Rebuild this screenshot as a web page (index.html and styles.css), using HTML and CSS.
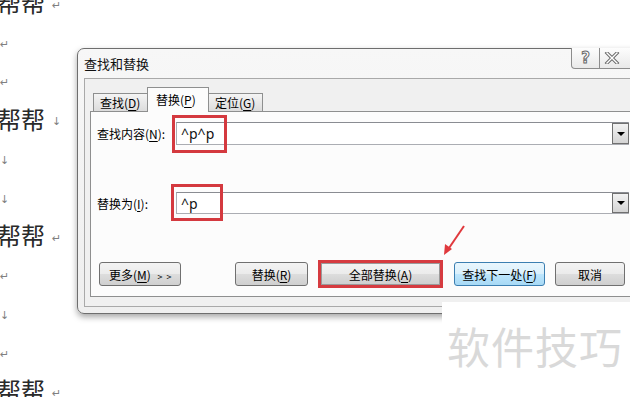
FILE: index.html
```html
<!DOCTYPE html>
<html lang="zh-CN">
<head>
  <meta charset="UTF-8">
  <title>查找和替换</title>
  <link rel="stylesheet" href="styles.css">
</head>
<body>

  <!-- Document behind the dialog -->
  <div class="doc">
    <div class="line"><span class="big">帮帮</span><span class="mark">↵</span></div>
    <div class="line"><span class="mark">↵</span></div>
    <div class="line"><span class="mark">↵</span></div>
    <div class="line"><span class="big">帮帮</span><span class="mark">↓</span></div>
    <div class="line"><span class="mark">↓</span></div>
    <div class="line"><span class="mark">↓</span></div>
    <div class="line"><span class="big">帮帮</span><span class="mark">↵</span></div>
    <div class="line"><span class="mark">↵</span></div>
    <div class="line"><span class="mark">↓</span></div>
    <div class="line"><span class="mark">↵</span></div>
    <div class="line"><span class="big">帮帮</span><span class="mark">↵</span></div>
  </div>

  <!-- Find and replace dialog -->
  <div class="dialog">
    <div class="titlebar">查找和替换</div>
    <div class="caption-btns">
      <div class="cap-btn help">?</div>
      <div class="cap-btn close">
        <svg width="16" height="12" viewBox="0 0 16 12">
          <path d="M3 1 L13 11 M13 1 L3 11" stroke="#6a6a6a" stroke-width="3.4" stroke-linecap="square"/>
          <path d="M3 1 L13 11 M13 1 L3 11" stroke="#fff" stroke-width="1.4" stroke-linecap="square"/>
        </svg>
      </div>
    </div>

    <div class="client">
      <div class="tabs">
        <div class="tab">查找(<u>D</u>)</div>
        <div class="tab active">替换(<u>P</u>)</div>
        <div class="tab">定位(<u>G</u>)</div>
      </div>

      <div class="page">
        <div class="row">
          <label class="label">查找内容(<u>N</u>):</label>
          <div class="combo">
            <span class="value">^p^p</span>
            <span class="drop"><i></i></span>
            <span class="mark-box find-box"></span>
          </div>
        </div>

        <div class="row row-replace">
          <label class="label">替换为(<u>I</u>):</label>
          <div class="combo short">
            <span class="value">^p</span>
            <span class="drop"><i></i></span>
            <span class="mark-box replace-box"></span>
          </div>
        </div>

        <div class="buttons">
          <button class="btn more">更多(<u>M</u>) <span class="gt">&gt; &gt;</span></button>
          <button class="btn replace">替换(<u>R</u>)</button>
          <div class="red-wrap"><button class="btn all">全部替换(<u>A</u>)</button></div>
          <button class="btn next">查找下一处(<u>F</u>)</button>
          <button class="btn cancel">取消</button>
        </div>
      </div>
    </div>
  </div>

  <!-- annotation arrow -->
  <svg class="arrow" width="36" height="40" viewBox="0 0 36 40">
    <path d="M29 4 L12 29" stroke="#e0393d" stroke-width="2" fill="none"/>
    <path d="M9 33 L10 22 L17 27 Z" fill="#e0393d"/>
  </svg>

  <!-- watermark -->
  <div class="watermark">软件技巧</div>

</body>
</html>
```

FILE: styles.css
```css
* {
  box-sizing: border-box;
}
body {
  margin: 0;
  width: 630px;
  height: 397px;
  overflow: hidden;
  position: relative;
  background: #fff;
  font-family: "Noto Sans CJK SC", "Noto Sans", sans-serif;
  font-size: 12px;
  color: #000;
}
u {
  text-decoration: underline;
  text-underline-offset: 2px;
}

/* document */
.doc {
  margin-top: -17px;
}
.line {
  height: 38.8px;
  display: flex;
  align-items: center;
}
.big {
  font-size: 24px;
  line-height: 1;
  color: #2a2a2a;
  margin-left: -3px;
  margin-right: 7px;
}
.mark {
  font-family: "DejaVu Sans", sans-serif;
  font-size: 11px;
  color: #808080;
  margin-top: 6px;
}

/* dialog frame */
.dialog {
  position: absolute;
  left: 77px;
  top: 48px;
  width: 600px;
  height: 266px;
  border: 1px solid #6e6e6e;
  border-radius: 7px 0 0 7px;
  background: linear-gradient(#f7f7f7, #efefef);
  box-shadow: 0 3px 6px rgba(0, 0, 0, 0.35);
}
.titlebar {
  height: 29px;
  line-height: 29px;
  padding-left: 6px;
  font-size: 13px;
  color: #111;
}
.caption-btns {
  position: absolute;
  top: -1px;
  left: 493px;
  display: flex;
}
.cap-btn {
  height: 21px;
  border: 1px solid #8c8c8c;
  border-top: none;
  background: linear-gradient(#fdfdfd, #e9e9e9);
  display: flex;
  align-items: center;
  justify-content: center;
}
.help {
  width: 29px;
  border-radius: 0 0 0 4px;
  font-family: "DejaVu Sans", sans-serif;
  font-weight: bold;
  font-size: 15px;
  color: #fff;
  -webkit-text-stroke: 1px #6a6a6a;
}
.close {
  width: 48px;
  border-left: none;
  justify-content: flex-start;
  padding-left: 4px;
}

/* client area */
.client {
  margin-left: 6px;
  height: 229px;
  border: 1px solid #a9a9a9;
  background: #f0f0f0;
  padding-left: 5px;
}
.tabs {
  height: 32px;
  display: flex;
  align-items: flex-end;
  padding-left: 3px;
}
.tab {
  height: 18px;
  padding: 0 6px;
  border: 1px solid #8e8f8f;
  border-bottom: none;
  background: linear-gradient(#f4f4f4, #dcdcdc);
  display: flex;
  align-items: center;
  font-size: 12px;
  color: #000;
}
.tab + .tab {
  margin-left: -1px;
}
.tab.active {
  height: 25px;
  margin-bottom: -1px;
  padding: 0 8px 2px;
  background: #fcfcfc;
  position: relative;
  z-index: 1;
}
.tab:first-child {
  width: 55px;
}
.tab.active {
  width: 62px;
}
.tab:last-child {
  width: 55px;
}
.page {
  height: 186px;
  border: 1px solid #8e8f8f;
  background: #fcfcfc;
  padding: 10px 0 0 6px;
}

/* fields */
.row {
  display: flex;
  align-items: center;
  height: 23px;
}
.row-replace {
  margin-top: 47px;
  height: 22px;
}
.label {
  width: 79px;
  font-size: 12px;
}
.combo {
  position: relative;
  width: 453px;
  height: 100%;
  border: 1px solid #abadb3;
  border-top-color: #8a8c92;
  background: #fff;
  display: flex;
  align-items: center;
}
.value {
  flex: 1;
  padding-left: 4px;
  font-family: "Noto Sans", sans-serif;
  font-size: 14px;
  color: #111;
}
.drop {
  width: 17px;
  height: 100%;
  border: 1px solid #707070;
  margin-right: -1px;
  background: linear-gradient(#f2f2f2, #d4d4d4);
  display: flex;
  align-items: center;
  justify-content: center;
}
.drop i {
  width: 0;
  height: 0;
  border-left: 4px solid transparent;
  border-right: 4px solid transparent;
  border-top: 4px solid #000;
}
.mark-box {
  position: absolute;
  border: 3px solid #d4393f;
}
.find-box {
  left: -5px;
  top: -8px;
  width: 55px;
  height: 38px;
}
.replace-box {
  left: -6px;
  top: -9px;
  width: 52px;
  height: 37px;
}

/* buttons */
.buttons {
  margin-top: 47px;
  display: flex;
  align-items: center;
  height: 26px;
}
.btn {
  height: 24px;
  border: 1px solid #707070;
  border-radius: 3px;
  background: linear-gradient(#f3f3f3 0%, #ebebeb 50%, #dddddd 51%, #cfcfcf 100%);
  font-family: "Noto Sans CJK SC", sans-serif;
  font-size: 12px;
  color: #000;
  padding: 0;
  margin: 0;
}
.more {
  width: 82px;
  margin-left: 2px;
  text-align: left;
  padding-left: 9px;
}
.gt {
  font-size: 9px;
  margin-left: 4px;
  letter-spacing: 1px;
}
.replace {
  width: 73px;
  margin-left: 54px;
}
.red-wrap {
  margin-left: 10px;
  width: 125px;
  height: 28px;
  border: 3px solid #d63b40;
  display: flex;
}
.all {
  width: 100%;
  height: 100%;
  border-radius: 0;
  border-color: #9a9a9a;
}
.next {
  width: 91px;
  margin-left: 11px;
  border-color: #3c7fb1;
  background: linear-gradient(#eaf6fd 0%, #d9f0fc 50%, #bee6fd 51%, #a7d9f5 100%);
}
.cancel {
  width: 70px;
  margin-left: 10px;
}

/* overlays */
.arrow {
  position: absolute;
  left: 435px;
  top: 222px;
}
.watermark {
  position: absolute;
  left: 442px;
  top: 302px;
  width: 188px;
  height: 95px;
  background: #fff;
  padding: 20px 0 0 5px;
  font-size: 43px;
  line-height: 1.1;
  color: #d9d9d9;
  letter-spacing: 1px;
}
```
